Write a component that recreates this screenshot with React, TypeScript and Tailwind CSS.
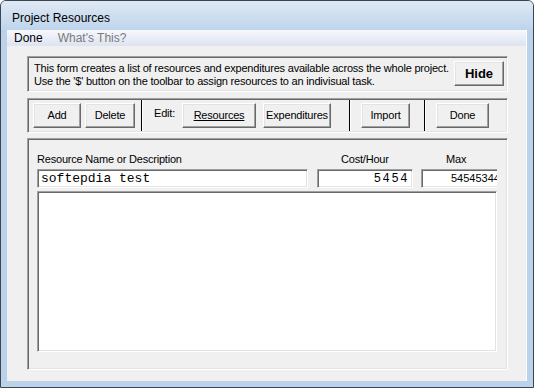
import React from 'react';

const sunken =
    'border border-t-[#a0a0a0] border-l-[#a0a0a0] border-r-white border-b-white shadow-[inset_1px_1px_0_#696969,inset_-1px_-1px_0_#e3e3e3]';
const raised =
    'border border-t-white border-l-white border-r-[#696969] border-b-[#696969] shadow-[inset_-1px_-1px_0_#a0a0a0,inset_1px_1px_0_#e3e3e3] bg-[#f0f0f0]';

const Btn: React.FC<{ w: string; className?: string; children: React.ReactNode }> = ({ w, className = '', children }) => (
    <div className={`${raised} ${w} h-[25px] flex items-center justify-center shrink-0 ${className}`}>{children}</div>
);

const Sep: React.FC<{ className?: string }> = ({ className = '' }) => (
    <div className={`flex self-stretch shrink-0 ${className}`}>
        <div className="w-px bg-black" />
        <div className="w-px bg-white" />
    </div>
);

const App: React.FC = () => {
    return (
        <div
            className="w-[534px] h-[388px] overflow-hidden rounded-t-[6px] border border-[#3a4653] bg-[#bcd2ea] flex flex-col text-black"
            style={{ fontFamily: '"Liberation Sans", Arial, sans-serif' }}
        >
            {/* Title bar */}
            <div className="h-[29px] shrink-0 bg-gradient-to-b from-[#dfe9f4] to-[#bed4ec] flex items-center pl-[11px] text-[12px] pt-[4px]">
                Project Resources
            </div>

            {/* Client area */}
            <div className="flex-1 mx-[6px] mb-[6px] flex flex-col border-r border-white">
                {/* Menu */}
                <div className="h-[16px] shrink-0 bg-gradient-to-b from-[#f7f8fc] to-[#dde3f1] flex items-center text-[12px] leading-none">
                    <span className="ml-[7px]">Done</span>
                    <span className="ml-[15px] text-[#7a7a7a]">What's This?</span>
                </div>

                {/* Body */}
                <div className="flex-1 bg-[#f0f0f0] pl-[20px] pr-[18px] pt-[10px] text-[11px] leading-none tracking-[-0.2px]">
                    {/* Info panel */}
                    <div className={`${sunken} h-[36px] flex items-start`}>
                        <div className="flex-1 pl-[6px] pt-[5px] leading-[13px] tracking-[-0.2px] whitespace-nowrap">
                            <div>This form creates a list of resources and expenditures available across the whole project.</div>
                            <div>Use the '$' button on the toolbar to assign resources to an indivisual task.</div>
                        </div>
                        <Btn w="w-[50px]" className="mt-[4px] mr-[3px] font-bold text-[13px] tracking-normal">
                            Hide
                        </Btn>
                    </div>

                    {/* Toolbar */}
                    <div className={`${sunken} h-[35px] mt-[6px] flex items-center py-[1px]`}>
                        <Btn w="w-[48px]" className="ml-[5px]">Add</Btn>
                        <Btn w="w-[50px]" className="ml-[4px]">Delete</Btn>
                        <Sep className="ml-[6px]" />
                        <span className="ml-[11px] -mt-[5px]">Edit:</span>
                        <Btn w="w-[74px]" className="ml-[7px]">
                            <span className="underline">Resources</span>
                        </Btn>
                        <Btn w="w-[68px]" className="ml-[7px]">Expenditures</Btn>
                        <Sep className="ml-[18px]" />
                        <Btn w="w-[49px]" className="ml-[10px]">Import</Btn>
                        <Sep className="ml-[14px]" />
                        <Btn w="w-[53px]" className="ml-[10px]">Done</Btn>
                    </div>

                    {/* Table */}
                    <div className={`${sunken} h-[232px] mt-[5px] pl-[9px] pt-[10px]`}>
                        <div className="w-[460px] overflow-hidden">
                            <div className="flex h-[20px] items-center">
                                <span className="w-[280px] shrink-0">Resource Name or Description</span>
                                <span className="w-[104px] shrink-0 pl-[24px]">Cost/Hour</span>
                                <span className="shrink-0 pl-[25px]">Max</span>
                            </div>
                            <div className="flex h-[19px] items-stretch">
                                <div
                                    className={`${sunken} bg-white w-[271px] shrink-0 flex items-center pl-[3px] text-[13px] tracking-normal`}
                                    style={{ fontFamily: '"Liberation Mono", "Courier New", monospace' }}
                                >
                                    softepdia test
                                </div>
                                <div
                                    className={`${sunken} bg-white w-[96px] ml-[9px] shrink-0 flex items-center justify-end pr-[3px] text-[12px] tracking-[1.6px]`}
                                    style={{ fontFamily: '"Liberation Mono", "Courier New", monospace' }}
                                >
                                    5454
                                </div>
                                <div className={`${sunken} bg-white w-[110px] ml-[8px] shrink-0 flex items-center pl-[29px] tracking-normal`}>
                                    54545344
                                </div>
                            </div>
                        </div>
                        <div className={`${sunken} bg-white w-[460px] h-[161px] mt-[3px]`} />
                    </div>
                </div>
            </div>
        </div>
    );
};

export default App;
